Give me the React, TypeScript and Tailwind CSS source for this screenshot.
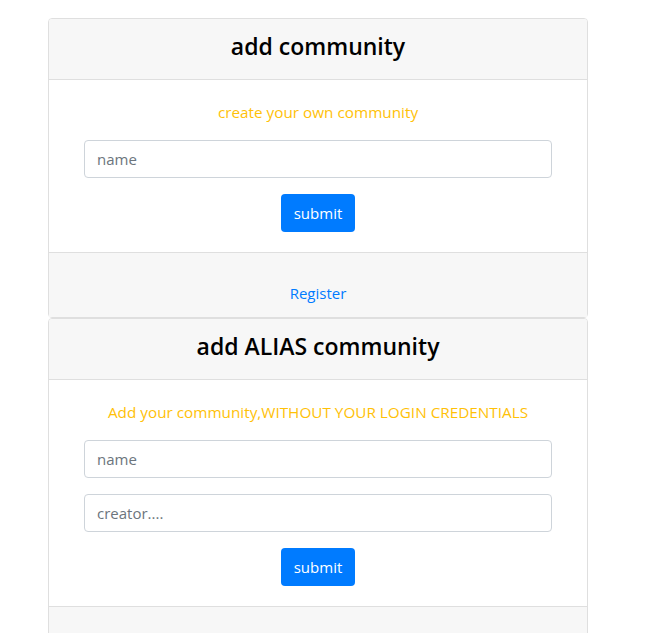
import React from "react";

const font = { fontFamily: '"Open Sans", "Noto Sans", sans-serif' };

type CardProps = {
  title: string;
  subtitle: string;
  fields: string[];
  footer?: string;
};

const CommunityCard: React.FC<CardProps> = ({ title, subtitle, fields, footer }) => {
  return (
    <div className="flex flex-col rounded-[4px] border border-[#dfdfdf] bg-white">
      {/* Header */}
      <div className="flex h-[61px] items-center justify-center rounded-t-[3px] border-b border-[#dfdfdf] bg-[#f7f7f7] pb-[5px]">
        <h3 className="text-[23px] font-semibold leading-[29px] text-black">{title}</h3>
      </div>

      {/* Body */}
      <div className="px-[35px] pt-5 pb-5">
        <p className="mb-4 text-center text-[15.3px] leading-6 text-[#ffc107]">{subtitle}</p>
        <div className="flex flex-col gap-4">
          {fields.map((f) => (
            <input
              key={f}
              type="text"
              placeholder={f}
              className="h-[38px] w-full rounded-[4px] border border-[#ced4da] px-3 text-[15px] text-[#495057] placeholder:text-[#6c757d] outline-none"
            />
          ))}
        </div>
        <div className="mt-4 flex justify-center">
          <button className="h-[38px] w-[74px] rounded-[4px] bg-[#007bff] text-[15px] text-white">
            submit
          </button>
        </div>
      </div>

      {/* Footer */}
      <div className="h-[65px] border-t border-[#dfdfdf] bg-[#f7f7f7] pt-[28px] text-center">
        {footer && (
          <a href="#" className="text-[15px] leading-6 text-[#007bff]">
            {footer}
          </a>
        )}
      </div>
    </div>
  );
};

const App: React.FC = () => {
  return (
    <div className="min-h-screen bg-white" style={font}>
      <div className="ml-[48px] w-[540px] pt-[18px]">
        <CommunityCard
          title="add community"
          subtitle="create your own community"
          fields={["name"]}
          footer="Register"
        />
        <CommunityCard
          title="add ALIAS community"
          subtitle="Add your community,WITHOUT YOUR LOGIN CREDENTIALS"
          fields={["name", "creator...."]}
        />
      </div>
    </div>
  );
};

export default App;
